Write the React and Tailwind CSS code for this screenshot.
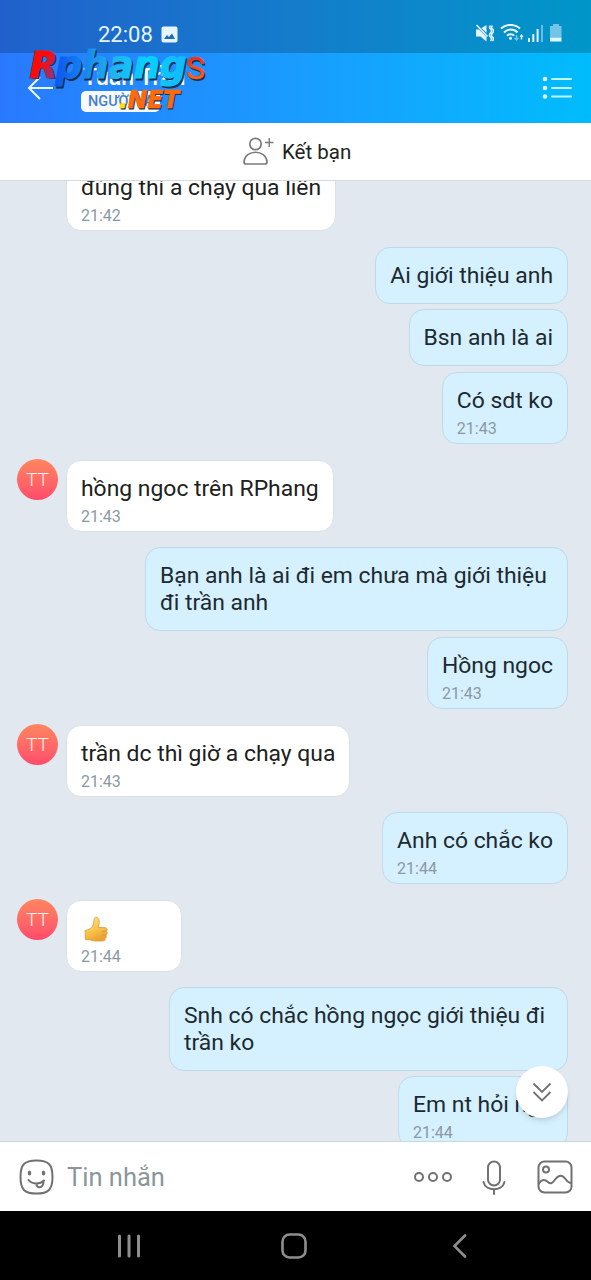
import React from 'react';

const messages = [
  { id: 1, from: 'them', text: 'đúng thì a chạy qua liền', time: '21:42', gap: 'mt-[-22px]' },
  { id: 2, from: 'me', text: 'Ai giới thiệu anh', gap: 'mt-4' },
  { id: 3, from: 'me', text: 'Bsn anh là ai', gap: 'mt-[5px]' },
  { id: 4, from: 'me', text: 'Có sdt ko', time: '21:43', gap: 'mt-[6px]' },
  { id: 5, from: 'them', text: 'hồng ngoc trên RPhang', time: '21:43', gap: 'mt-4', avatar: true },
  { id: 6, from: 'me', text: 'Bạn anh là ai đi em chưa mà giới thiệu đi trần anh', gap: 'mt-[15px]', width: 'w-[423px]' },
  { id: 7, from: 'me', text: 'Hồng ngoc', time: '21:43', gap: 'mt-[6px]' },
  { id: 8, from: 'them', text: 'trần dc thì giờ a chạy qua', time: '21:43', gap: 'mt-4', avatar: true },
  { id: 9, from: 'me', text: 'Anh có chắc ko', time: '21:44', gap: 'mt-[15px]' },
  { id: 10, from: 'them', emoji: true, time: '21:44', gap: 'mt-4', avatar: true, width: 'w-[116px]' },
  { id: 11, from: 'me', text: 'Snh có chắc hồng ngọc giới thiệu đi trần ko', gap: 'mt-[15px]', width: 'w-[399px]' },
  { id: 12, from: 'me', text: 'Em nt hỏi nge', time: '21:44', gap: 'mt-[5px]', width: 'w-[170px]' }
];

const ThumbUp = () => (
  <svg width="26" height="27" viewBox="0 0 26 27" className="ml-[2px]">
    <defs>
      <linearGradient id="thumb" x1="0" y1="0" x2="0.4" y2="1">
        <stop offset="0" stopColor="#ffe08a" />
        <stop offset="0.6" stopColor="#fbc44c" />
        <stop offset="1" stopColor="#e9a434" />
      </linearGradient>
    </defs>
    <path
      d="M2 15.5C6 15 9.500 12.500 10.500 9C11 6.500 10.800 2.200 13 2.200C15.500 2.200 17 5 16 9.500L15.200 12.500H21.500C24.500 12.500 24.800 15.500 23.300 16.200C24.800 17.500 24.200 19.500 22.800 20C24 21.200 23.300 23 22 23.300C22.500 25 21.500 26 19.500 26H12C9.500 26 8.500 24.700 6 24.700H2.500Z"
      fill="url(#thumb)"
      stroke="#d99a3a"
      strokeWidth="0.8"
      strokeLinejoin="round"
    />
    <path d="M19 16.300H23M19.500 20H22.500" stroke="#cf8c2c" strokeWidth="0.6" fill="none" />
  </svg>
);

const Message = ({ msg }) => {
  const mine = msg.from === 'me';

  return (
    <div className={`flex items-start ${mine ? 'justify-end pr-[23px]' : 'pl-[17px]'} ${msg.gap}`}>
      {!mine && (
        <div className="w-[49px] shrink-0">
          {msg.avatar && (
            <div className="w-[41px] h-[41px] -mt-px rounded-full bg-linear-to-b from-[#ff865f] to-[#ff4a6b] flex items-center justify-center text-white/90 text-[19px] font-light leading-none">
              TT
            </div>
          )}
        </div>
      )}
      <div
        className={`rounded-[15px] border pt-[14px] px-[14px] ${msg.time ? 'pb-1' : 'pb-[14px]'} ${
          mine ? 'bg-[#d5f0ff] border-[#bfd9e8] text-[#1c2a30]' : 'bg-white border-[#dbe1e7] text-[#202020]'
        } ${msg.width || ''}`}
      >
        <p className={`text-[22.9px] leading-[27px] ${msg.width ? '' : 'whitespace-nowrap'}`}>
          {msg.emoji ? <ThumbUp /> : msg.text}
        </p>
        {msg.time && <p className="mt-[5px] text-base leading-5 text-[#8b98a3]">{msg.time}</p>}
      </div>
    </div>
  );
};

const StatusBar = () => (
  <div className="h-[53px] bg-black/20 flex items-start pl-[98px] pr-[29px] pt-[22px] text-[#e4f5ff]">
    <span className="text-[22px] leading-[26px]">22:08</span>
    <svg width="17" height="17" viewBox="0 0 17 17" className="ml-[8px] mt-[4px]">
      <rect x="0.500" y="0.500" width="16" height="16" rx="2" fill="#e4f5ff" />
      <path d="M3 13L6 9L8 11L11 7.500L14 13Z" fill="#2068bb" />
    </svg>
    <div className="ml-auto flex gap-[6px] pt-[2px]">
      {/* muted + vibrate */}
      <svg width="19" height="20" viewBox="0 0 19 20" fill="#e4f5ff">
        <path d="M1 5.500H4L11.500 13V17.500L5.500 12.500H1Z" />
        <path d="M6.500 4L11.500 1V9Z" />
        <path d="M1.500 1L12.500 12.500" stroke="#e4f5ff" strokeWidth="1.600" />
        <path d="M15.500 1.500Q13.500 3.300 15.500 5T15.500 9T15.500 13T15.500 17M17.500 1.500Q15.500 3.300 17.500 5T17.500 9T17.500 13T17.500 17" fill="none" stroke="#e4f5ff" strokeWidth="1.500" />
      </svg>
      <svg width="24" height="19" viewBox="0 0 24 19" fill="none" stroke="#e4f5ff" strokeWidth="2">
        <path d="M1 4.500C6 -0.300 15 -0.300 20 4.500" />
        <path d="M4 8.500C8 4.600 14 4.600 17.500 8.500" />
        <path d="M7 11.700C9 9.700 12.500 9.700 14.200 11.700" />
        <circle cx="10.500" cy="14.300" r="1.500" fill="#e4f5ff" stroke="none" />
        <path d="M16.500 11V16M14.500 14L16.500 16L18.500 14" strokeWidth="1.500" opacity="0.500" />
        <path d="M21.500 15.500V11" strokeWidth="1.500" />
        <path d="M19.500 13L21.500 10L23.500 13Z" fill="#e4f5ff" stroke="none" />
      </svg>
      <svg width="16" height="18" viewBox="0 0 16 18" fill="#e4f5ff" className="-ml-[2px]">
        <rect x="0" y="14" width="2" height="4" />
        <rect x="4.300" y="10" width="2" height="8" />
        <rect x="8.600" y="5" width="2" height="13" />
        <rect x="13" y="1" width="2" height="17" opacity="0.450" />
      </svg>
      <svg width="12" height="18" viewBox="0 0 12 18" fill="#e4f5ff">
        <path d="M3 0H9V2H11.500V13.500H0V2H3Z" opacity="0.500" />
        <path d="M0 13.500H11.500V17.500H0Z" />
      </svg>
    </div>
  </div>
);

const Logo = () => (
  <svg width="190" height="72" viewBox="20 42 190 72" className="absolute left-[20px] top-[42px]" fontFamily="DejaVu Sans" fontWeight="bold" fontStyle="italic">
    <defs>
      <linearGradient id="logoR" x1="0" y1="0" x2="1" y2="1">
        <stop offset="0.450" stopColor="#ff0a0a" />
        <stop offset="0.900" stopColor="#70409f" />
      </linearGradient>
      <linearGradient id="logoBlue">
        <stop offset="0" stopColor="#0b55ee" />
        <stop offset="0.450" stopColor="#20b4f0" />
        <stop offset="0.700" stopColor="#08d0ff" />
        <stop offset="1" stopColor="#12b8ff" />
      </linearGradient>
      <linearGradient id="logoS" x1="0" y1="0" x2="0" y2="1">
        <stop offset="0.200" stopColor="#f52020" />
        <stop offset="1" stopColor="#ff8a10" />
      </linearGradient>
    </defs>
    <g fill="#17304f">
      <text x="31.500" y="79" fontSize="37" textLength="28" lengthAdjust="spacingAndGlyphs">R</text>
      <text x="57" y="79.500" fontSize="37" textLength="131" lengthAdjust="spacingAndGlyphs" stroke="#17304f" strokeWidth="0.800">phang</text>
      <text x="187.500" y="80.500" fontSize="32" fontWeight="normal" fontStyle="normal" fontFamily="Roboto">S</text>
      <text x="120" y="109" fontSize="25" textLength="60" lengthAdjust="spacingAndGlyphs" stroke="#17304f" strokeWidth="0.800">.NET</text>
    </g>
    <text x="29.500" y="77.500" fontSize="37" textLength="28" lengthAdjust="spacingAndGlyphs" fill="url(#logoR)" stroke="url(#logoR)">R</text>
    <text x="55.500" y="78" fontSize="37" textLength="131" lengthAdjust="spacingAndGlyphs" fill="url(#logoBlue)" stroke="url(#logoBlue)" strokeWidth="1.200">phang</text>
    <text x="186" y="79" fontSize="32" fontWeight="normal" fontStyle="normal" fontFamily="Roboto" fill="url(#logoS)" stroke="#f04a18" strokeWidth="0.600">S</text>
    <text x="119" y="107.500" fontSize="25" textLength="60" lengthAdjust="spacingAndGlyphs" fill="#ff6a0a" stroke="#ff6a0a" strokeWidth="0.700">
      <tspan fill="#ffe000" stroke="#ffe000">.</tspan>NET
    </text>
  </svg>
);

const Header = () => (
  <header className="relative h-[123px] shrink-0 bg-linear-to-r from-[#2979ff] to-[#00bcfc]">
    <StatusBar />
    <div className="h-[70px] flex items-start pl-[27px] pr-[18px]">
      <svg width="27" height="24" viewBox="0 0 27 24" fill="none" stroke="#eaf6ff" strokeWidth="2" className="mt-[23px]">
        <path d="M26 12H2M13 1L2 12L13 23" />
      </svg>
      <div className="ml-[27px] pt-[11px]">
        <h1 className="text-[23px] leading-[27px] font-medium text-white pl-[2px]">Tuấn Trần</h1>
        <span className="block w-[79px] h-[21px] rounded-[5px] bg-[#f7fbff] text-[#4480cf] text-[14.5px] leading-[21px] font-medium pl-[7px] whitespace-nowrap">
          NGƯỜI LẠ
        </span>
      </div>
      <svg width="31" height="24" viewBox="0 0 31 24" className="ml-auto mt-[23px]">
        <g fill="#d9fbff">
          <circle cx="3" cy="3" r="2.300" />
          <circle cx="3" cy="12" r="2.300" />
          <circle cx="3" cy="20.500" r="2.300" />
        </g>
        <path d="M10 3H29M10 12H29M10 20.500H29" stroke="#bff6ff" strokeWidth="2" strokeLinecap="round" />
      </svg>
    </div>
    <Logo />
  </header>
);

const InputBar = () => (
  <div className="h-[70px] shrink-0 bg-white border-t border-[#ccd5da] flex items-center pl-[19px] pr-[18px]">
    <svg width="35" height="36" viewBox="0 0 35 36" fill="none" stroke="#717171" strokeWidth="2" strokeLinecap="round">
      <path d="M17.500 1.500C29.500 1.500 33.500 5.500 33.500 18C33.500 30.500 29.500 34.500 17.500 34.500C5.500 34.500 1.500 30.500 1.500 18C1.500 5.500 5.500 1.500 17.500 1.500Z" />
      <ellipse cx="10.500" cy="14" rx="1" ry="1.800" fill="#717171" strokeWidth="1.500" />
      <ellipse cx="24.500" cy="14" rx="1" ry="1.800" fill="#717171" strokeWidth="1.500" />
      <path d="M9.500 21C13 25.500 21 25.500 25 21.500M17.500 24.500C17 30 24.500 29.500 24.500 22.500" />
    </svg>
    <span className="ml-[13px] mt-px text-[25.5px] leading-[30px] text-[#8b969c]">Tin nhắn</span>
    <div className="ml-auto flex items-center">
      <svg width="38" height="12" viewBox="0 0 38 12" fill="none" stroke="#717171" strokeWidth="2">
        <circle cx="5" cy="6" r="4" />
        <circle cx="19" cy="6" r="4" />
        <circle cx="33" cy="6" r="4" />
      </svg>
      <svg width="24" height="36" viewBox="0 0 24 36" fill="none" stroke="#717171" strokeWidth="2" strokeLinecap="round" className="ml-[30px] mt-[3px]">
        <rect x="6" y="1.500" width="12" height="24" rx="6" />
        <path d="M1.500 22C3.500 31.500 20.500 31.500 22.500 22M12 30V34" />
      </svg>
      <svg width="36" height="34" viewBox="0 0 36 34" fill="none" stroke="#717171" strokeWidth="2" className="ml-[31px]">
        <rect x="1.500" y="1.500" width="33" height="31" rx="6" />
        <circle cx="9" cy="9.500" r="3" />
        <path d="M1.500 24C5 19 7.500 19 11 22C14 25 16 22.500 18.500 19C22 14.500 25.500 14.500 28.500 19C30.500 22 32 23 34.500 23" />
      </svg>
    </div>
  </div>
);

const NavBar = () => (
  <div className="h-[69px] shrink-0 bg-black flex items-center pl-[117px]">
    <svg width="24" height="24" viewBox="0 0 24 24" stroke="#8e8e8e" strokeWidth="3" strokeLinecap="round">
      <path d="M2.500 2V22M12 2V22M21.500 2V22" />
    </svg>
    <svg width="26" height="26" viewBox="0 0 26 26" fill="none" stroke="#8e8e8e" strokeWidth="2.600" className="ml-[140px]">
      <rect x="1.500" y="1.500" width="23" height="23" rx="7" />
    </svg>
    <svg width="15" height="24" viewBox="0 0 15 24" fill="none" stroke="#8e8e8e" strokeWidth="2.600" strokeLinecap="round" className="ml-[145px]">
      <path d="M13 1.500L2.500 12L13 22.500" />
    </svg>
  </div>
);

const App = () => {
  return (
    <div className="w-[591px] h-[1280px] flex flex-col overflow-hidden bg-[#e2e8f0] font-[Roboto,sans-serif]">
      <Header />

      {/* Add friend bar */}
      <div className="h-[58px] shrink-0 bg-white border-b border-[#d5dadf] flex items-center pl-[243px]">
        <svg width="31" height="29" viewBox="0 0 31 29" fill="none" stroke="#7b7b7b" strokeWidth="1.700">
          <circle cx="12.500" cy="7" r="5.700" />
          <path d="M1 25C2 12 23 12 24 25C24 26.500 23.500 27 22 27H3C1.500 27 1 26.500 1 25Z" />
          <path d="M22 5.500H30.500M26.200 1V10" strokeWidth="1.400" />
        </svg>
        <span className="ml-[8px] text-[20.5px] leading-6 text-[#222]">Kết bạn</span>
      </div>

      {/* Conversation */}
      <div className="relative flex-1 min-h-0 overflow-hidden">
        <div className="flex flex-col">
          {messages.map((msg) => (
            <Message key={msg.id} msg={msg} />
          ))}
        </div>
        <button className="absolute right-[23px] bottom-[23px] w-[52px] h-[52px] rounded-full bg-white shadow-md flex items-center justify-center">
          <svg width="20" height="20" viewBox="0 0 20 20" fill="none" stroke="#717171" strokeWidth="1.800">
            <path d="M1.500 1.500L10 10L18.500 1.500M1.500 10L10 18.500L18.500 10" />
          </svg>
        </button>
      </div>

      <InputBar />
      <NavBar />
    </div>
  );
};

export default App;
